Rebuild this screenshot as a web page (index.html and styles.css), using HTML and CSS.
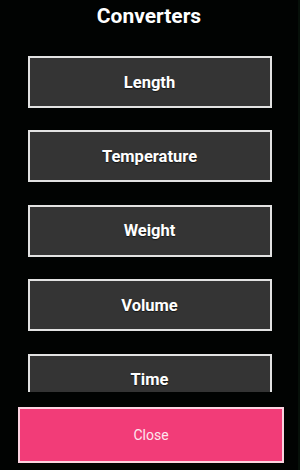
FILE: index.html
```html
<!DOCTYPE html>
<html lang="en">
<head>
    <meta charset="UTF-8">
    <meta name="viewport" content="width=device-width, initial-scale=1.0">
    <title>Converters</title>
    <link rel="stylesheet" href="styles.css">
</head>
<body>
    <div class="screen">
        <h1 class="title">Converters</h1>
        <div class="list">
            <button class="item">Length</button>
            <button class="item">Temperature</button>
            <button class="item">Weight</button>
            <button class="item">Volume</button>
            <button class="item">Time</button>
        </div>
        <button class="close">Close</button>
    </div>
</body>
</html>
```

FILE: styles.css
```css
html, body {
    margin: 0;
    padding: 0;
    background: #010302;
}
.screen {
    width: 300px;
    height: 470px;
    box-sizing: border-box;
    border-right: 2px solid #061009;
    display: flex;
    flex-direction: column;
    font-family: Roboto, "Liberation Sans", sans-serif;
    color: #fff;
}
.title {
    margin: 0;
    height: 34px;
    line-height: 32px;
    font-size: 21px;
    font-weight: bold;
    text-align: center;
}
.list {
    height: 358px;
    overflow: hidden;
    display: flex;
    flex-direction: column;
    align-items: center;
    padding-top: 22px;
    box-sizing: border-box;
    gap: 22.4px;
}
.item {
    flex: none;
    width: 244px;
    height: 52px;
    margin-left: 1px;
    background: #343434;
    border: 2px solid #e2e2e2;
    color: #fff;
    font-family: inherit;
    font-size: 16.5px;
    font-weight: bold;
    text-shadow: 0 1px 1px rgba(0,0,0,0.6);
}
.close {
    margin: 15px 0 0 18px;
    width: 266px;
    height: 56px;
    background: #f23c78;
    border: 2px solid #fbd3e0;
    color: #fde6ee;
    font-family: inherit;
    font-size: 14px;
}
```
